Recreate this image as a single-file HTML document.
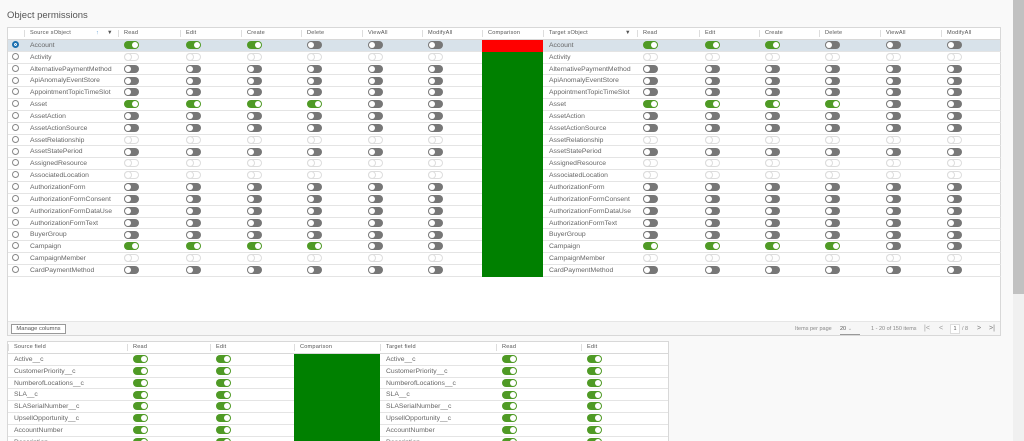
<!DOCTYPE html>
<html><head><meta charset="utf-8"><style>
*{box-sizing:border-box;margin:0;padding:0}
html{overflow:hidden;width:1024px;height:441px}
body{width:1024px;height:441px;overflow:hidden;background:#f9f9f9;font-family:"Liberation Sans",sans-serif;color:#666;position:relative}
.title{position:absolute;left:7px;top:10px;font-size:9.5px;color:#555}
.g{position:absolute;background:#fff;border:1px solid #d8d8d8}
.r{display:flex;height:11.85px}
.c{height:100%;border-bottom:1px solid #e4e4e4;font-size:6.8px;line-height:11px;padding-left:6px;white-space:nowrap;overflow:hidden;position:relative;flex:none}
.h .c{font-size:5.6px;color:#555;line-height:11px;border-bottom:1px solid #d8d8d8;letter-spacing:.2px}
.h .c.s::before{content:"";position:absolute;left:0;top:2px;height:7px;border-left:1px solid #ddd}
.cmp{border-bottom:none;padding:0}
.gr{background:#008000}.rd{background:#f00}
.sel{background:#d8e2ea}
.t{display:inline-block;width:15px;height:8px;border-radius:4px;vertical-align:middle;position:relative;margin-top:0}
.t::after{content:"";position:absolute;top:1px;width:6px;height:6px;border-radius:50%;background:#fff}
.t1{background:#4f9a25}.t1::after{right:1px}
.t0{background:#777}.t0::after{left:1px}
.te{border:1px solid #ddd;background:#fff}.te::after{display:none}
.te::before{content:"";position:absolute;left:-1px;top:-1px;width:8px;height:8px;border:1px solid #ddd;border-radius:50%;box-sizing:border-box}
.rad{display:inline-block;width:7px;height:7px;border:1px solid #888;border-radius:50%;vertical-align:middle;margin-top:-1px}
.rad.on{border:2px solid #1a6fb0;background:#1a6fb0;box-shadow:inset 0 0 0 1px #fff}
.w0{width:16px;padding-left:4px}.w1{width:94px}.w2{width:62px}.w3{width:61px}.w4{width:60px}
.scroll{position:absolute;left:1013px;top:0;width:11px;height:441px;background:#f0f0f0}
.thumb{position:absolute;left:1013px;top:0;width:11px;height:294px;background:#c1c1c1}
.foot{position:absolute;left:0;right:0;bottom:0;height:14px;background:#f6f6f6;border-top:1px solid #e6e6e6;font-size:5.5px;color:#888}
.mb{position:absolute;left:3px;top:2px;height:10px;width:55px;border:1px solid #999;background:#fff;font-size:5.8px;line-height:8px;text-align:center;color:#555}
</style></head><body>
<div class="title">Object permissions</div>
<div class="g" style="left:7px;top:27px;width:994px;height:309px">
<div class="r h"><div class="c w0"></div><div class="c w1 s">Source sObject<span style="position:absolute;left:72px;color:#5a9bd5">↑</span><span style="position:absolute;left:83px">▼</span></div><div class="c w2 s">Read</div><div class="c w3 s">Edit</div><div class="c w4 s">Create</div><div class="c w3 s">Delete</div><div class="c w4 s">ViewAll</div><div class="c w4 s">ModifyAll</div><div class="c w3 s">Comparison</div><div class="c w1 s">Target sObject<span style="position:absolute;left:82px">▼</span></div><div class="c w2 s">Read</div><div class="c w4 s">Edit</div><div class="c w4 s">Create</div><div class="c w3 s">Delete</div><div class="c w3 s">ViewAll</div><div class="c w4 s">ModifyAll</div></div>
<div class="r sel"><div class="c w0"><span class="rad on"></span></div><div class="c w1">Account</div><div class="c w2"><i class="t t1"></i></div><div class="c w3"><i class="t t1"></i></div><div class="c w4"><i class="t t1"></i></div><div class="c w3"><i class="t t0"></i></div><div class="c w4"><i class="t t0"></i></div><div class="c w4"><i class="t t0"></i></div><div class="c w3 cmp rd"></div><div class="c w1">Account</div><div class="c w2"><i class="t t1"></i></div><div class="c w4"><i class="t t1"></i></div><div class="c w4"><i class="t t1"></i></div><div class="c w3"><i class="t t0"></i></div><div class="c w3"><i class="t t0"></i></div><div class="c w4"><i class="t t0"></i></div></div>
<div class="r"><div class="c w0"><span class="rad"></span></div><div class="c w1">Activity</div><div class="c w2"><i class="t te"></i></div><div class="c w3"><i class="t te"></i></div><div class="c w4"><i class="t te"></i></div><div class="c w3"><i class="t te"></i></div><div class="c w4"><i class="t te"></i></div><div class="c w4"><i class="t te"></i></div><div class="c w3 cmp gr"></div><div class="c w1">Activity</div><div class="c w2"><i class="t te"></i></div><div class="c w4"><i class="t te"></i></div><div class="c w4"><i class="t te"></i></div><div class="c w3"><i class="t te"></i></div><div class="c w3"><i class="t te"></i></div><div class="c w4"><i class="t te"></i></div></div>
<div class="r"><div class="c w0"><span class="rad"></span></div><div class="c w1">AlternativePaymentMethod</div><div class="c w2"><i class="t t0"></i></div><div class="c w3"><i class="t t0"></i></div><div class="c w4"><i class="t t0"></i></div><div class="c w3"><i class="t t0"></i></div><div class="c w4"><i class="t t0"></i></div><div class="c w4"><i class="t t0"></i></div><div class="c w3 cmp gr"></div><div class="c w1">AlternativePaymentMethod</div><div class="c w2"><i class="t t0"></i></div><div class="c w4"><i class="t t0"></i></div><div class="c w4"><i class="t t0"></i></div><div class="c w3"><i class="t t0"></i></div><div class="c w3"><i class="t t0"></i></div><div class="c w4"><i class="t t0"></i></div></div>
<div class="r"><div class="c w0"><span class="rad"></span></div><div class="c w1">ApiAnomalyEventStore</div><div class="c w2"><i class="t t0"></i></div><div class="c w3"><i class="t t0"></i></div><div class="c w4"><i class="t t0"></i></div><div class="c w3"><i class="t t0"></i></div><div class="c w4"><i class="t t0"></i></div><div class="c w4"><i class="t t0"></i></div><div class="c w3 cmp gr"></div><div class="c w1">ApiAnomalyEventStore</div><div class="c w2"><i class="t t0"></i></div><div class="c w4"><i class="t t0"></i></div><div class="c w4"><i class="t t0"></i></div><div class="c w3"><i class="t t0"></i></div><div class="c w3"><i class="t t0"></i></div><div class="c w4"><i class="t t0"></i></div></div>
<div class="r"><div class="c w0"><span class="rad"></span></div><div class="c w1">AppointmentTopicTimeSlot</div><div class="c w2"><i class="t t0"></i></div><div class="c w3"><i class="t t0"></i></div><div class="c w4"><i class="t t0"></i></div><div class="c w3"><i class="t t0"></i></div><div class="c w4"><i class="t t0"></i></div><div class="c w4"><i class="t t0"></i></div><div class="c w3 cmp gr"></div><div class="c w1">AppointmentTopicTimeSlot</div><div class="c w2"><i class="t t0"></i></div><div class="c w4"><i class="t t0"></i></div><div class="c w4"><i class="t t0"></i></div><div class="c w3"><i class="t t0"></i></div><div class="c w3"><i class="t t0"></i></div><div class="c w4"><i class="t t0"></i></div></div>
<div class="r"><div class="c w0"><span class="rad"></span></div><div class="c w1">Asset</div><div class="c w2"><i class="t t1"></i></div><div class="c w3"><i class="t t1"></i></div><div class="c w4"><i class="t t1"></i></div><div class="c w3"><i class="t t1"></i></div><div class="c w4"><i class="t t0"></i></div><div class="c w4"><i class="t t0"></i></div><div class="c w3 cmp gr"></div><div class="c w1">Asset</div><div class="c w2"><i class="t t1"></i></div><div class="c w4"><i class="t t1"></i></div><div class="c w4"><i class="t t1"></i></div><div class="c w3"><i class="t t1"></i></div><div class="c w3"><i class="t t0"></i></div><div class="c w4"><i class="t t0"></i></div></div>
<div class="r"><div class="c w0"><span class="rad"></span></div><div class="c w1">AssetAction</div><div class="c w2"><i class="t t0"></i></div><div class="c w3"><i class="t t0"></i></div><div class="c w4"><i class="t t0"></i></div><div class="c w3"><i class="t t0"></i></div><div class="c w4"><i class="t t0"></i></div><div class="c w4"><i class="t t0"></i></div><div class="c w3 cmp gr"></div><div class="c w1">AssetAction</div><div class="c w2"><i class="t t0"></i></div><div class="c w4"><i class="t t0"></i></div><div class="c w4"><i class="t t0"></i></div><div class="c w3"><i class="t t0"></i></div><div class="c w3"><i class="t t0"></i></div><div class="c w4"><i class="t t0"></i></div></div>
<div class="r"><div class="c w0"><span class="rad"></span></div><div class="c w1">AssetActionSource</div><div class="c w2"><i class="t t0"></i></div><div class="c w3"><i class="t t0"></i></div><div class="c w4"><i class="t t0"></i></div><div class="c w3"><i class="t t0"></i></div><div class="c w4"><i class="t t0"></i></div><div class="c w4"><i class="t t0"></i></div><div class="c w3 cmp gr"></div><div class="c w1">AssetActionSource</div><div class="c w2"><i class="t t0"></i></div><div class="c w4"><i class="t t0"></i></div><div class="c w4"><i class="t t0"></i></div><div class="c w3"><i class="t t0"></i></div><div class="c w3"><i class="t t0"></i></div><div class="c w4"><i class="t t0"></i></div></div>
<div class="r"><div class="c w0"><span class="rad"></span></div><div class="c w1">AssetRelationship</div><div class="c w2"><i class="t te"></i></div><div class="c w3"><i class="t te"></i></div><div class="c w4"><i class="t te"></i></div><div class="c w3"><i class="t te"></i></div><div class="c w4"><i class="t te"></i></div><div class="c w4"><i class="t te"></i></div><div class="c w3 cmp gr"></div><div class="c w1">AssetRelationship</div><div class="c w2"><i class="t te"></i></div><div class="c w4"><i class="t te"></i></div><div class="c w4"><i class="t te"></i></div><div class="c w3"><i class="t te"></i></div><div class="c w3"><i class="t te"></i></div><div class="c w4"><i class="t te"></i></div></div>
<div class="r"><div class="c w0"><span class="rad"></span></div><div class="c w1">AssetStatePeriod</div><div class="c w2"><i class="t t0"></i></div><div class="c w3"><i class="t t0"></i></div><div class="c w4"><i class="t t0"></i></div><div class="c w3"><i class="t t0"></i></div><div class="c w4"><i class="t t0"></i></div><div class="c w4"><i class="t t0"></i></div><div class="c w3 cmp gr"></div><div class="c w1">AssetStatePeriod</div><div class="c w2"><i class="t t0"></i></div><div class="c w4"><i class="t t0"></i></div><div class="c w4"><i class="t t0"></i></div><div class="c w3"><i class="t t0"></i></div><div class="c w3"><i class="t t0"></i></div><div class="c w4"><i class="t t0"></i></div></div>
<div class="r"><div class="c w0"><span class="rad"></span></div><div class="c w1">AssignedResource</div><div class="c w2"><i class="t te"></i></div><div class="c w3"><i class="t te"></i></div><div class="c w4"><i class="t te"></i></div><div class="c w3"><i class="t te"></i></div><div class="c w4"><i class="t te"></i></div><div class="c w4"><i class="t te"></i></div><div class="c w3 cmp gr"></div><div class="c w1">AssignedResource</div><div class="c w2"><i class="t te"></i></div><div class="c w4"><i class="t te"></i></div><div class="c w4"><i class="t te"></i></div><div class="c w3"><i class="t te"></i></div><div class="c w3"><i class="t te"></i></div><div class="c w4"><i class="t te"></i></div></div>
<div class="r"><div class="c w0"><span class="rad"></span></div><div class="c w1">AssociatedLocation</div><div class="c w2"><i class="t te"></i></div><div class="c w3"><i class="t te"></i></div><div class="c w4"><i class="t te"></i></div><div class="c w3"><i class="t te"></i></div><div class="c w4"><i class="t te"></i></div><div class="c w4"><i class="t te"></i></div><div class="c w3 cmp gr"></div><div class="c w1">AssociatedLocation</div><div class="c w2"><i class="t te"></i></div><div class="c w4"><i class="t te"></i></div><div class="c w4"><i class="t te"></i></div><div class="c w3"><i class="t te"></i></div><div class="c w3"><i class="t te"></i></div><div class="c w4"><i class="t te"></i></div></div>
<div class="r"><div class="c w0"><span class="rad"></span></div><div class="c w1">AuthorizationForm</div><div class="c w2"><i class="t t0"></i></div><div class="c w3"><i class="t t0"></i></div><div class="c w4"><i class="t t0"></i></div><div class="c w3"><i class="t t0"></i></div><div class="c w4"><i class="t t0"></i></div><div class="c w4"><i class="t t0"></i></div><div class="c w3 cmp gr"></div><div class="c w1">AuthorizationForm</div><div class="c w2"><i class="t t0"></i></div><div class="c w4"><i class="t t0"></i></div><div class="c w4"><i class="t t0"></i></div><div class="c w3"><i class="t t0"></i></div><div class="c w3"><i class="t t0"></i></div><div class="c w4"><i class="t t0"></i></div></div>
<div class="r"><div class="c w0"><span class="rad"></span></div><div class="c w1">AuthorizationFormConsent</div><div class="c w2"><i class="t t0"></i></div><div class="c w3"><i class="t t0"></i></div><div class="c w4"><i class="t t0"></i></div><div class="c w3"><i class="t t0"></i></div><div class="c w4"><i class="t t0"></i></div><div class="c w4"><i class="t t0"></i></div><div class="c w3 cmp gr"></div><div class="c w1">AuthorizationFormConsent</div><div class="c w2"><i class="t t0"></i></div><div class="c w4"><i class="t t0"></i></div><div class="c w4"><i class="t t0"></i></div><div class="c w3"><i class="t t0"></i></div><div class="c w3"><i class="t t0"></i></div><div class="c w4"><i class="t t0"></i></div></div>
<div class="r"><div class="c w0"><span class="rad"></span></div><div class="c w1">AuthorizationFormDataUse</div><div class="c w2"><i class="t t0"></i></div><div class="c w3"><i class="t t0"></i></div><div class="c w4"><i class="t t0"></i></div><div class="c w3"><i class="t t0"></i></div><div class="c w4"><i class="t t0"></i></div><div class="c w4"><i class="t t0"></i></div><div class="c w3 cmp gr"></div><div class="c w1">AuthorizationFormDataUse</div><div class="c w2"><i class="t t0"></i></div><div class="c w4"><i class="t t0"></i></div><div class="c w4"><i class="t t0"></i></div><div class="c w3"><i class="t t0"></i></div><div class="c w3"><i class="t t0"></i></div><div class="c w4"><i class="t t0"></i></div></div>
<div class="r"><div class="c w0"><span class="rad"></span></div><div class="c w1">AuthorizationFormText</div><div class="c w2"><i class="t t0"></i></div><div class="c w3"><i class="t t0"></i></div><div class="c w4"><i class="t t0"></i></div><div class="c w3"><i class="t t0"></i></div><div class="c w4"><i class="t t0"></i></div><div class="c w4"><i class="t t0"></i></div><div class="c w3 cmp gr"></div><div class="c w1">AuthorizationFormText</div><div class="c w2"><i class="t t0"></i></div><div class="c w4"><i class="t t0"></i></div><div class="c w4"><i class="t t0"></i></div><div class="c w3"><i class="t t0"></i></div><div class="c w3"><i class="t t0"></i></div><div class="c w4"><i class="t t0"></i></div></div>
<div class="r"><div class="c w0"><span class="rad"></span></div><div class="c w1">BuyerGroup</div><div class="c w2"><i class="t t0"></i></div><div class="c w3"><i class="t t0"></i></div><div class="c w4"><i class="t t0"></i></div><div class="c w3"><i class="t t0"></i></div><div class="c w4"><i class="t t0"></i></div><div class="c w4"><i class="t t0"></i></div><div class="c w3 cmp gr"></div><div class="c w1">BuyerGroup</div><div class="c w2"><i class="t t0"></i></div><div class="c w4"><i class="t t0"></i></div><div class="c w4"><i class="t t0"></i></div><div class="c w3"><i class="t t0"></i></div><div class="c w3"><i class="t t0"></i></div><div class="c w4"><i class="t t0"></i></div></div>
<div class="r"><div class="c w0"><span class="rad"></span></div><div class="c w1">Campaign</div><div class="c w2"><i class="t t1"></i></div><div class="c w3"><i class="t t1"></i></div><div class="c w4"><i class="t t1"></i></div><div class="c w3"><i class="t t1"></i></div><div class="c w4"><i class="t t0"></i></div><div class="c w4"><i class="t t0"></i></div><div class="c w3 cmp gr"></div><div class="c w1">Campaign</div><div class="c w2"><i class="t t1"></i></div><div class="c w4"><i class="t t1"></i></div><div class="c w4"><i class="t t1"></i></div><div class="c w3"><i class="t t1"></i></div><div class="c w3"><i class="t t0"></i></div><div class="c w4"><i class="t t0"></i></div></div>
<div class="r"><div class="c w0"><span class="rad"></span></div><div class="c w1">CampaignMember</div><div class="c w2"><i class="t te"></i></div><div class="c w3"><i class="t te"></i></div><div class="c w4"><i class="t te"></i></div><div class="c w3"><i class="t te"></i></div><div class="c w4"><i class="t te"></i></div><div class="c w4"><i class="t te"></i></div><div class="c w3 cmp gr"></div><div class="c w1">CampaignMember</div><div class="c w2"><i class="t te"></i></div><div class="c w4"><i class="t te"></i></div><div class="c w4"><i class="t te"></i></div><div class="c w3"><i class="t te"></i></div><div class="c w3"><i class="t te"></i></div><div class="c w4"><i class="t te"></i></div></div>
<div class="r"><div class="c w0"><span class="rad"></span></div><div class="c w1">CardPaymentMethod</div><div class="c w2"><i class="t t0"></i></div><div class="c w3"><i class="t t0"></i></div><div class="c w4"><i class="t t0"></i></div><div class="c w3"><i class="t t0"></i></div><div class="c w4"><i class="t t0"></i></div><div class="c w4"><i class="t t0"></i></div><div class="c w3 cmp gr"></div><div class="c w1">CardPaymentMethod</div><div class="c w2"><i class="t t0"></i></div><div class="c w4"><i class="t t0"></i></div><div class="c w4"><i class="t t0"></i></div><div class="c w3"><i class="t t0"></i></div><div class="c w3"><i class="t t0"></i></div><div class="c w4"><i class="t t0"></i></div></div>
<div class="foot"><div class="mb">Manage columns</div>
<span style="position:absolute;left:787px;top:4px">Items per page</span>
<span style="position:absolute;left:832px;top:4px;color:#555;border-bottom:1px solid #999;width:20px;height:9px">20 <span style="color:#aaa">⌄</span></span>
<span style="position:absolute;left:863px;top:4px">1 - 20 of 150 items</span>
<span style="position:absolute;left:916px;top:3px;font-size:7px;color:#999">|&lt;</span>
<span style="position:absolute;left:931px;top:3px;font-size:7px;color:#999">&lt;</span>
<span style="position:absolute;left:942px;top:2px;width:10px;height:10px;background:#fff;border:1px solid #ddd;text-align:center;line-height:8px;color:#555">1</span>
<span style="position:absolute;left:954px;top:4px">/ 8</span>
<span style="position:absolute;left:969px;top:3px;font-size:7px;color:#777">&gt;</span>
<span style="position:absolute;left:981px;top:3px;font-size:7px;color:#777">&gt;|</span>
</div>
</div>

<div class="g" style="left:7px;top:341px;width:662px;height:100px;border-bottom:none;overflow:hidden">
<div class="r h"><div class="c s" style="width:119px">Source field</div><div class="c s" style="width:83px">Read</div><div class="c s" style="width:84px">Edit</div><div class="c s" style="width:86px">Comparison</div><div class="c s" style="width:116px">Target field</div><div class="c s" style="width:85px">Read</div><div class="c s" style="width:88px">Edit</div></div>
<div class="r"><div class="c" style="width:119px">Active__c</div><div class="c" style="width:83px"><i class="t t1"></i></div><div class="c" style="width:84px"><i class="t t1"></i></div><div class="c cmp gr" style="width:86px"></div><div class="c" style="width:116px">Active__c</div><div class="c" style="width:85px"><i class="t t1"></i></div><div class="c" style="width:88px"><i class="t t1"></i></div></div>
<div class="r"><div class="c" style="width:119px">CustomerPriority__c</div><div class="c" style="width:83px"><i class="t t1"></i></div><div class="c" style="width:84px"><i class="t t1"></i></div><div class="c cmp gr" style="width:86px"></div><div class="c" style="width:116px">CustomerPriority__c</div><div class="c" style="width:85px"><i class="t t1"></i></div><div class="c" style="width:88px"><i class="t t1"></i></div></div>
<div class="r"><div class="c" style="width:119px">NumberofLocations__c</div><div class="c" style="width:83px"><i class="t t1"></i></div><div class="c" style="width:84px"><i class="t t1"></i></div><div class="c cmp gr" style="width:86px"></div><div class="c" style="width:116px">NumberofLocations__c</div><div class="c" style="width:85px"><i class="t t1"></i></div><div class="c" style="width:88px"><i class="t t1"></i></div></div>
<div class="r"><div class="c" style="width:119px">SLA__c</div><div class="c" style="width:83px"><i class="t t1"></i></div><div class="c" style="width:84px"><i class="t t1"></i></div><div class="c cmp gr" style="width:86px"></div><div class="c" style="width:116px">SLA__c</div><div class="c" style="width:85px"><i class="t t1"></i></div><div class="c" style="width:88px"><i class="t t1"></i></div></div>
<div class="r"><div class="c" style="width:119px">SLASerialNumber__c</div><div class="c" style="width:83px"><i class="t t1"></i></div><div class="c" style="width:84px"><i class="t t1"></i></div><div class="c cmp gr" style="width:86px"></div><div class="c" style="width:116px">SLASerialNumber__c</div><div class="c" style="width:85px"><i class="t t1"></i></div><div class="c" style="width:88px"><i class="t t1"></i></div></div>
<div class="r"><div class="c" style="width:119px">UpsellOpportunity__c</div><div class="c" style="width:83px"><i class="t t1"></i></div><div class="c" style="width:84px"><i class="t t1"></i></div><div class="c cmp gr" style="width:86px"></div><div class="c" style="width:116px">UpsellOpportunity__c</div><div class="c" style="width:85px"><i class="t t1"></i></div><div class="c" style="width:88px"><i class="t t1"></i></div></div>
<div class="r"><div class="c" style="width:119px">AccountNumber</div><div class="c" style="width:83px"><i class="t t1"></i></div><div class="c" style="width:84px"><i class="t t1"></i></div><div class="c cmp gr" style="width:86px"></div><div class="c" style="width:116px">AccountNumber</div><div class="c" style="width:85px"><i class="t t1"></i></div><div class="c" style="width:88px"><i class="t t1"></i></div></div>
<div class="r"><div class="c" style="width:119px">Description</div><div class="c" style="width:83px"><i class="t t1"></i></div><div class="c" style="width:84px"><i class="t t1"></i></div><div class="c cmp gr" style="width:86px"></div><div class="c" style="width:116px">Description</div><div class="c" style="width:85px"><i class="t t1"></i></div><div class="c" style="width:88px"><i class="t t1"></i></div></div>
</div>
<div class="scroll"></div><div class="thumb"></div>
</body></html>
